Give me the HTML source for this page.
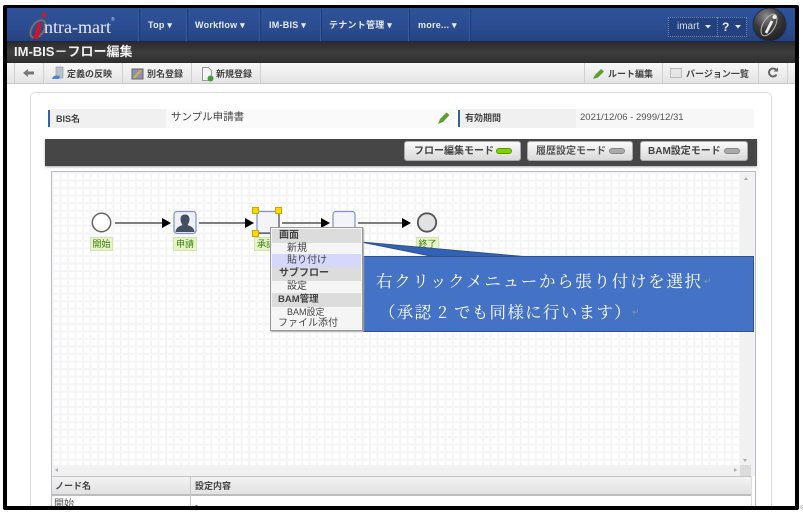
<!DOCTYPE html>
<html lang="ja"><head><meta charset="utf-8"><title>IM-BIS</title>
<style>
html,body{margin:0;padding:0;background:#fff}
#p{position:relative;width:803px;height:513px;overflow:hidden;background:#fff;font-family:"Liberation Sans","Noto Sans CJK JP",sans-serif;color:#333}
#p div,#p span.a{position:absolute;box-sizing:border-box}
.t{position:absolute;white-space:nowrap;line-height:14px}
.nav{color:#e6ebf5;font-size:9px;font-weight:bold;top:18px;letter-spacing:.25px}
.sep{top:9px;width:2px;height:32px;background:#3a5b9c;border-right:1px solid #1d3a78}
.tb{color:#444;font-size:9px;font-weight:bold;top:67px}
.tsep{top:63px;width:1px;height:20px;background:#d0d0d0}
.btn{top:141px;height:20px;background:linear-gradient(#fafafa,#d9d9d9);border:1px solid #aaa;border-radius:3px}
.btn span{position:absolute;top:3px;font-size:10px;font-weight:bold;color:#444;white-space:nowrap;line-height:13px}
.led{top:6px;width:16px;height:6px;border-radius:3px;background:#aaa;border:1px solid #888}
.lbl{background:#e6f5c5;border:1px solid #d6e2b6;color:#3a7a10;font-size:9px;height:14px;line-height:12px;text-align:center}
.m{position:absolute;white-space:nowrap;font-size:10px;line-height:13px;color:#444}
.h{position:absolute;left:1px;width:89px;height:14px;background:#dcdcdc}
.hd{width:7px;height:7px;background:#ffd800;border:1px solid #c9a800}
</style></head><body><div id="p">
<!-- header -->
<div style="left:7px;top:8px;width:789px;height:34px;background:linear-gradient(#2f5299,#2b4c90 60%,#26437f);border-bottom:1px solid #15284f"></div>
<div style="left:7px;top:42px;width:789px;height:21px;background:linear-gradient(#2b2b2b,#3d3d3d 50%,#2e2e2e)"></div>
<div style="left:7px;top:63px;width:789px;height:21px;background:linear-gradient(#f7f7f7,#e4e4e4);border-bottom:1px solid #c8c8c8"></div>
<svg style="position:absolute;left:28px;top:12px" width="22" height="30" viewBox="0 0 22 30"><ellipse cx="10" cy="17" rx="6" ry="10" transform="rotate(35 10 17)" fill="none" stroke="#7a6a70" stroke-width="2"/><path d="M14 11 L10 27 L5 27 L10 11Z" fill="#d3131f"/><circle cx="16" cy="3" r="2.400" fill="#c81c28"/></svg>
<span class="t" style="left:44px;top:17px;font:18px/20px 'Liberation Serif',serif;color:#e8ebf2">ntra-mart</span>
<span class="t" style="left:111px;top:17px;font-size:5px;line-height:6px;color:#cdd">®</span>
<div class="sep" style="left:138px"></div><div class="sep" style="left:186px"></div><div class="sep" style="left:259px"></div><div class="sep" style="left:320px"></div>
<div class="sep" style="left:408px"></div><div class="sep" style="left:469px"></div>
<span class="t nav" style="left:148px">Top ▾</span>
<span class="t nav" style="left:195px">Workflow ▾</span>
<span class="t nav" style="left:269px">IM-BIS ▾</span>
<span class="t nav" style="left:329px">テナント管理 ▾</span>
<span class="t nav" style="left:418px">more... ▾</span>
<div style="left:668px;top:17px;width:79px;height:20px;background:#23407f;border:1px dotted #6f88b8"></div>
<div style="left:717px;top:17px;width:1px;height:20px;border-left:1px dotted #6f88b8"></div>
<span class="t" style="left:677px;top:20px;font-size:10px;color:#d5dcea">imart</span>
<svg style="position:absolute;left:705px;top:25px" width="28" height="5"><path d="M0 0H6L3 3.500Z" fill="#e6ebf5"/></svg>
<span class="t" style="left:722px;top:20px;font-size:12px;font-weight:bold;color:#e6ebf5">?</span>
<svg style="position:absolute;left:735px;top:25px" width="8" height="5"><path d="M0 0H6L3 3.500Z" fill="#e6ebf5"/></svg>
<svg style="position:absolute;left:752px;top:7px" width="35" height="35" viewBox="0 0 35 35"><defs><radialGradient id="g" cx=".4" cy=".25" r=".8"><stop offset="0" stop-color="#8a8a8a"/><stop offset=".5" stop-color="#3a3a3a"/><stop offset="1" stop-color="#1e1e1e"/></radialGradient></defs><circle cx="17.500" cy="17.500" r="16.500" fill="url(#g)" stroke="#1b2f5a"/><ellipse cx="17" cy="18" rx="6" ry="12" transform="rotate(30 17 18)" fill="none" stroke="#bbb" stroke-width="1"/><path d="M20 14 L14 26" stroke="#f0f0f0" stroke-width="2.800" fill="none"/><circle cx="22.500" cy="10" r="2" fill="#eee"/></svg>
<span class="t" style="left:14px;top:45px;font-size:13px;font-weight:bold;color:#f0f0f0">IM-BIS－フロー編集</span>
<!-- toolbar -->
<div class="tsep" style="left:14px"></div><div class="tsep" style="left:43px"></div><div class="tsep" style="left:122px"></div><div class="tsep" style="left:191px"></div><div class="tsep" style="left:260px"></div>
<div class="tsep" style="left:584px"></div><div class="tsep" style="left:662px"></div><div class="tsep" style="left:758px"></div><div class="tsep" style="left:787px"></div>
<svg style="position:absolute;left:23px;top:68px" width="12" height="10" viewBox="0 0 12 10"><path d="M0 5 L5 1 V3.500 H11 V6.500 H5 V9Z" fill="#777"/></svg>
<svg style="position:absolute;left:51px;top:66px" width="14" height="15" viewBox="0 0 14 15"><rect x="5" y="1" width="7" height="11" fill="#b9c2cc" stroke="#8a94a0" stroke-width=".6"/><path d="M1 13 C2 9 6 9 9 10 L8 13Z" fill="#4a86d0"/></svg>
<span class="t tb" style="left:67px">定義の反映</span>
<svg style="position:absolute;left:131px;top:67px" width="13" height="13" viewBox="0 0 13 13"><rect x="1" y="2" width="11" height="10" fill="#8f8fb8" stroke="#666"/><path d="M3 11 L10 3" stroke="#d8b33a" stroke-width="2"/></svg>
<span class="t tb" style="left:147px">別名登録</span>
<svg style="position:absolute;left:201px;top:67px" width="13" height="15" viewBox="0 0 13 15"><path d="M1.500 .5 H7.500 L10.500 3.500 V13.500 H1.500Z" fill="#f5f5f5" stroke="#999"/><circle cx="9.500" cy="11.500" r="3" fill="#4a9a3c"/></svg>
<span class="t tb" style="left:216px">新規登録</span>
<svg style="position:absolute;left:592px;top:67px" width="13" height="13" viewBox="0 0 13 13"><path d="M3 8 L9 2 L12 4.500 L6 10.500 L1 12Z" fill="#5f9e2c"/></svg>
<span class="t tb" style="left:608px">ルート編集</span>
<div style="left:670px;top:68px;width:12px;height:10px;background:#e5e5e5;border:1px solid #bbb"></div>
<span class="t tb" style="left:686px">バージョン一覧</span>
<svg style="position:absolute;left:767px;top:67px" width="11" height="11" viewBox="0 0 11 11"><path d="M9.500 3.500 A4 4 0 1 0 9.500 7.500" fill="none" stroke="#666" stroke-width="2"/><path d="M6.500 4.500 H11 V0.500Z" fill="#666"/></svg>
<!-- panel -->
<div style="left:30px;top:92px;width:742px;height:430px;background:#fff;border:1px solid #ddd;border-radius:5px"></div>
<div style="left:48px;top:109px;width:118px;height:19px;background:#f0f0f0"></div>
<div style="left:48px;top:110px;width:2px;height:17px;background:#3a5ea8"></div>
<span class="t" style="left:56px;top:112px;font-size:9px;font-weight:bold;color:#444">BIS名</span>
<div style="left:166px;top:109px;width:289px;height:19px;background:#fafafa"></div>
<span class="t" style="left:171px;top:110px;font-size:10.500px;color:#444">サンプル申請書</span>
<svg style="position:absolute;left:437px;top:111px" width="14" height="14" viewBox="0 0 14 14"><path d="M3 8 L9.500 1.500 L12.500 4 L6 11 L1 13Z" fill="#5f9e2c"/></svg>
<div style="left:458px;top:109px;width:118px;height:19px;background:#f0f0f0"></div>
<div style="left:458px;top:110px;width:2px;height:17px;background:#3a5ea8"></div>
<span class="t" style="left:465px;top:111px;font-size:9px;font-weight:bold;color:#444">有効期間</span>
<div style="left:576px;top:109px;width:178px;height:19px;background:#f7f7f7"></div>
<span class="t" style="left:580px;top:111px;font-size:9.500px;color:#555">2021/12/06 - 2999/12/31</span>
<!-- dark bar -->
<div style="left:45px;top:139px;width:712px;height:27px;background:#464646;box-shadow:0 1px 2px #aaa"></div>
<div class="btn" style="left:404px;width:117px"><span style="left:9px">フロー編集モード</span><div class="led" style="left:91px;background:#7fd000;border-color:#5a9a00"></div></div>
<div class="btn" style="left:527px;width:106px"><span style="left:8px;color:#555">履歴設定モード</span><div class="led" style="left:81px"></div></div>
<div class="btn" style="left:640px;width:108px"><span style="left:7px">BAM設定モード</span><div class="led" style="left:83px"></div></div>
<!-- canvas -->
<div style="left:51px;top:171px;width:705px;height:340px;background:#fff;border:1px solid #b9bcc4;border-bottom:0"></div>
<div style="left:52px;top:172px;width:688px;height:293px;background-color:#fff;background-image:linear-gradient(#f5f5f5 2px,transparent 2px),linear-gradient(90deg,#f5f5f5 2px,transparent 2px);background-size:7.550px 7.550px"></div>
<div style="left:740px;top:172px;width:15px;height:293px;background:#f1f1f1"></div>
<div style="left:52px;top:465px;width:703px;height:11px;background:#f1f1f1"></div>
<div style="left:740px;top:465px;width:11px;height:11px;background:#dcdcdc"></div>
<div style="left:744px;top:177px;border:2.500px solid transparent;border-bottom:3px solid #aaa;border-top:0"></div>
<div style="left:743px;top:459px;border:2.500px solid transparent;border-top:3px solid #aaa;border-bottom:0"></div>
<div style="left:55px;top:468px;border:2.500px solid transparent;border-right:3px solid #aaa;border-left:0"></div>
<div style="left:734px;top:468px;border:2.500px solid transparent;border-left:3px solid #aaa;border-right:0"></div>
<!-- table -->
<div style="left:52px;top:476px;width:699px;height:20px;background:linear-gradient(#f3f3f3,#e2e2e2);border-top:1px solid #c4c4c4;border-bottom:2px solid #bdbdbd"></div>
<div style="left:190px;top:477px;width:1px;height:34px;background:#c9c9c9"></div>
<div style="left:751px;top:476px;width:1px;height:35px;background:#ddd"></div>
<span class="t" style="left:55px;top:479px;font-size:9px;font-weight:bold;color:#444">ノード名</span>
<span class="t" style="left:195px;top:479px;font-size:9px;font-weight:bold;color:#444">設定内容</span>
<span class="t" style="left:54px;top:498px;font-size:10px;color:#555">開始</span>
<span class="t" style="left:195px;top:498px;font-size:9px;color:#555">-</span>
<!-- flow -->
<svg style="position:absolute;left:52px;top:172px" width="400" height="80" viewBox="52 172 400 80">
<g stroke="#555" stroke-width="1.500" fill="none"><path d="M115 223H163M199 223H246M282 223H322M358 223H402"/></g>
<g fill="#000"><path d="M162 218L171 223L162 228Z"/><path d="M245 218L254 223L245 228Z"/><path d="M321 218L330 223L321 228Z"/><path d="M402 218L411 223L402 228Z"/></g>
<circle cx="101.500" cy="222.500" r="9.200" fill="#fff" stroke="#666" stroke-width="1.500"/>
<circle cx="427" cy="222.500" r="9.200" fill="#e2e2e2" stroke="#555" stroke-width="1.800"/>
<rect x="174" y="211.500" width="22" height="22" rx="3" fill="#eef0f6" stroke="#7f95c8" stroke-width="1.200"/>
<path d="M175.500 232C176 227 180 226 182.500 225C181 223 180.500 221 180.500 219C180.500 216 182.500 214.500 185 214.500C187.500 214.500 189.500 216 189.500 219C189.500 221 189 223 187.500 225C190 226 194 227 194.500 232Z" fill="#44505f"/>
<rect x="257" y="211.500" width="22" height="22" rx="3" fill="#f3f4f8" stroke="#7f95c8" stroke-width="1.200"/>
<path d="M279 212V233H258" stroke="#555" stroke-width="1.200" fill="none"/>
<rect x="333" y="211.500" width="22" height="22" rx="3" fill="#f3f4f8" stroke="#7f95c8" stroke-width="1.200"/>
</svg>
<div class="hd" style="left:252px;top:207px"></div><div class="hd" style="left:275px;top:207px"></div><div class="hd" style="left:252px;top:230px"></div>
<div class="lbl" style="left:90px;top:237px;width:23px">開始</div>
<div class="lbl" style="left:173px;top:237px;width:24px">申請</div>
<div class="lbl" style="left:254px;top:237px;width:24px">承認</div>
<div class="lbl" style="left:416px;top:237px;width:23px">終了</div>
<!-- callout -->
<svg style="position:absolute;left:355px;top:235px" width="170" height="24" viewBox="0 0 170 24"><path d="M6 7 L168 21.500 L78 21.500Z" fill="#3362b4" stroke="#2f528f" stroke-width="1"/></svg>
<div style="left:363px;top:256px;width:391px;height:76px;background:#4472c4;border:1.500px solid #2f528f"></div>
<span class="t" style="left:376px;top:270px;font:16.500px/20px 'Noto Serif CJK SC','Noto Serif CJK JP','Liberation Serif',serif;letter-spacing:1.700px;color:#fff">右クリックメニューから張り付けを選択</span>
<span class="t" style="left:704px;top:274px;font-size:9px;color:#8a94a8">↵</span>
<span class="t" style="left:379px;top:301px;font:16.500px/20px 'Noto Serif CJK SC','Noto Serif CJK JP','Liberation Serif',serif;letter-spacing:1.300px;color:#fff">（承認 2 でも同様に行います）</span>
<span class="t" style="left:632px;top:305px;font-size:9px;color:#8a94a8">↵</span>
<!-- menu -->
<div style="left:270px;top:227px;width:93px;height:104px;background:#f5f5f5;border:1px solid #999;box-shadow:1px 1px 1px #aaa">
<div class="h" style="top:1px"></div><div class="h" style="top:26px;height:13px;left:1px;background:#d5d8fb"></div><div class="h" style="top:39px"></div><div class="h" style="top:65px"></div>
<span class="m" style="left:8px;top:1px;font-weight:bold">画面</span>
<span class="m" style="left:16px;top:14px">新規</span>
<span class="m" style="left:16px;top:26px">貼り付け</span>
<span class="m" style="left:8px;top:39px;font-weight:bold">サブフロー</span>
<span class="m" style="left:16px;top:52px">設定</span>
<span class="m" style="left:7px;top:65px;font-weight:bold;font-size:9.500px">BAM管理</span>
<span class="m" style="left:16px;top:78px;font-size:9px">BAM設定</span>
<span class="m" style="left:7px;top:89px">ファイル添付</span>
</div>
<!-- black frame -->
<div style="left:3px;top:5px;width:796px;height:505px;border:solid #000;border-width:3.500px 4px 4px 4px;border-radius:2px"></div>
<div style="left:0;top:510px;width:803px;height:3px;background:#fff"></div>
<span class="t" style="left:799px;top:501px;font-size:8px;color:#999">≪</span>
</div></body></html>
